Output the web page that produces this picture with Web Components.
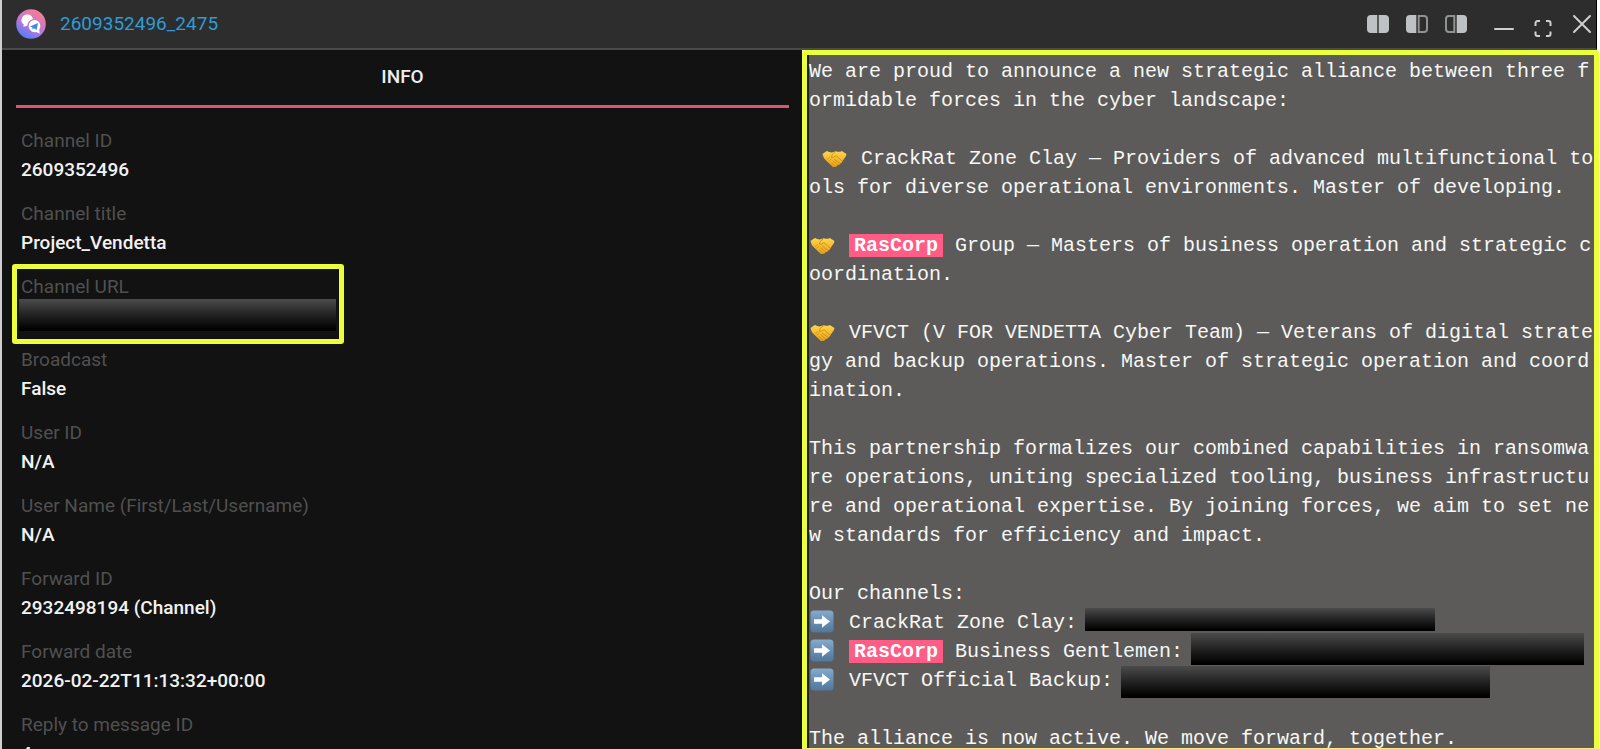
<!DOCTYPE html>
<html lang="en">
<head>
<meta charset="utf-8">
<title>2609352496_2475</title>
<style>
html, body { margin: 0; height: 100%; overflow: hidden; background: #cfcfcf; }
</style>
</head>
<body>
<message-window></message-window>
<script>
const define = (name, html) => {
  const t = document.createElement('template');
  t.innerHTML = html;
  customElements.define(name, class extends HTMLElement {
    constructor() {
      super();
      this.attachShadow({ mode: 'open' }).append(t.content.cloneNode(true));
    }
  });
};

define('redacted-bar', `<style>
:host { display: block; height: 32px; background: linear-gradient(#4b4b4b, #222 50%, #000 95%); }
</style>`);

define('mark-tag', `<style>
:host { display: inline; padding: 0 5px; background: #ff5c86; color: #fff; font-weight: 700; }
</style><slot></slot>`);

define('emoji-handshake', `<style>
:host { display: inline-block; width: 28px; height: 20px; vertical-align: -5px; white-space: normal; }
svg { display: block; margin-left: 1px; }
</style>
<svg width="25" height="20" viewBox="0 0 25 20" aria-hidden="true">
<defs><linearGradient id="g" x1="0" y1="0" x2="0" y2="1"><stop offset="0" stop-color="#ffd54a"/><stop offset="1" stop-color="#e9a21b"/></linearGradient></defs>
<path d="M.5 5 4.800 2Q8.600 4 11.500 3.100L14 2.200Q17 3.600 19.800 2L24.500 5Q24.600 7.400 21.800 10.200L20.300 12.300Q20 14.400 18.200 14.400 17.500 16.300 15.700 16 14.500 18.200 12.800 17.800 11 18.800 9.400 16.400L4.600 12Q.9 8.600.5 5Z" fill="url(#g)"/>
<path d="M12.800 3.200Q9.600 5 9.300 8 11.400 9.300 14 6.600L20.300 12.300M12.600 10.400l5.400 4M11 12l4.600 4M9.300 13.500l3.500 3.700M5.500 10.200l1.800-1.600M7 12l2-1.900" fill="none" stroke="#c98712" stroke-width=".8" stroke-linecap="round"/>
</svg>`);

define('emoji-arrow', `<style>
:host { display: inline-block; width: 28px; height: 23px; vertical-align: -5px; white-space: normal; }
svg { display: block; margin-left: 1px; }
</style>
<svg width="24" height="23" viewBox="0 0 24 23" aria-hidden="true">
<defs><linearGradient id="g" x1="0" y1="0" x2="0" y2="1"><stop offset="0" stop-color="#86abcc"/><stop offset=".5" stop-color="#6690b5"/><stop offset="1" stop-color="#52779a"/></linearGradient></defs>
<rect x=".5" y=".5" width="23" height="22" rx="3.500" fill="url(#g)"/>
<path d="M4 9.300h8V5.300L20 11.500l-8 6.200v-4H4z" fill="#fff"/>
</svg>`);

define('title-bar', `<style>
:host { display: flex; align-items: center; box-sizing: border-box; height: 50px; padding: 0 4px 0 14px; background: #2d2d2d; border-bottom: 2px solid #4a4a4a; }
a { flex: 1; margin-left: 14px; color: #2f9bd7; text-decoration: none; font-size: 19px; line-height: 24px; }
.tools, .views, .controls { display: flex; align-items: center; }
.tools { gap: 27px; }
.views { gap: 17px; }
.controls { gap: 20px; }
button { display: block; padding: 0; border: 0; background: none; }
svg { display: block; }
</style>
<svg width="30" height="30" viewBox="0 0 30 30" aria-hidden="true">
<defs><linearGradient id="g" x1=".15" y1="1" x2=".75" y2="0"><stop offset="0" stop-color="#3f7dff"/><stop offset=".45" stop-color="#b678dc"/><stop offset="1" stop-color="#ff7d87"/></linearGradient></defs>
<circle cx="15" cy="15" r="14.800" fill="url(#g)"/>
<path d="M11.500 5.500a5.600 5.600 0 0 1 5.400 4.800 7.200 7.200 0 0 0-5.600 6.500l-4 .9.500-2.100a5.600 5.600 0 0 1 3.700-10.100Z" fill="#fff"/>
<path d="M18.200 11a6.100 6.100 0 0 1 5 9.600l.5 3.800-3.500-1.400A6.100 6.100 0 1 1 18.200 11Z" fill="#fff"/>
<path d="m14 17.400 8-3.300-1.300 7-2.700-1.800-1.500 1.300-.1-2.200z" fill="#3a8fe0"/>
</svg>
<a href="#">2609352496_2475</a>
<div class="tools">
<div class="views">
<button aria-label="Split view"><svg width="22" height="18" viewBox="0 0 22 18"><path d="M4 0h6.300v18H4a4 4 0 0 1-4-4V4a4 4 0 0 1 4-4ZM11.700 0H18a4 4 0 0 1 4 4v10a4 4 0 0 1-4 4h-6.300z" fill="#bfc2c4"/></svg></button>
<button aria-label="Left view"><svg width="22" height="18" viewBox="0 0 22 18"><path d="M4 0h6.300v18H4a4 4 0 0 1-4-4V4a4 4 0 0 1 4-4Z" fill="#bfc2c4"/><path d="M12.700 1H18a3 3 0 0 1 3 3v10a3 3 0 0 1-3 3h-5.300z" fill="none" stroke="#8f9192" stroke-width="2"/></svg></button>
<button aria-label="Right view"><svg width="22" height="18" viewBox="0 0 22 18"><path d="M11.700 0H18a4 4 0 0 1 4 4v10a4 4 0 0 1-4 4h-6.300z" fill="#bfc2c4"/><path d="M9.300 1H4a3 3 0 0 0-3 3v10a3 3 0 0 0 3 3h5.300z" fill="none" stroke="#8f9192" stroke-width="2"/></svg></button>
</div>
<div class="controls">
<button aria-label="Minimize"><svg width="20" height="20" viewBox="0 0 20 20"><path d="M1 15h18" stroke="#d0d0d0" stroke-width="2" stroke-linecap="round"/></svg></button>
<button aria-label="Full screen"><svg width="18" height="28" viewBox="0 0 18 28"><path d="M1.500 16v-3a2 2 0 0 1 2-2h2.500M12 11h2.500a2 2 0 0 1 2 2v3M16.500 21.500v2.500a2 2 0 0 1-2 2H12M6 26H3.500a2 2 0 0 1-2-2v-2.500" fill="none" stroke="#d0d0d0" stroke-width="2"/></svg></button>
<button aria-label="Close"><svg width="20" height="20" viewBox="0 0 20 20"><path d="m2 2 16 16M18 2 2 18" stroke="#d0d0d0" stroke-width="2" stroke-linecap="round"/></svg></button>
</div>
</div>`);

define('info-field', `<style>
:host { display: block; position: relative; font-size: 19px; line-height: 29px; }
.label { color: #505050; }
.value { color: #f2f2f2; font-weight: 500; }
</style>
<div class="label"><slot name="label"></slot></div>
<div class="value"><slot></slot></div>`);

define('info-panel', `<style>
:host { display: block; min-width: 0; padding: 0 13px 0 14px; background: #121212; }
.tab { display: block; width: 100%; height: 58px; padding: 0 0 2px; border: 0; border-bottom: 3px solid #de5273; background: none; color: #eee; font: 500 19px/24px Roboto, sans-serif; }
.list { display: flex; flex-direction: column; gap: 15px; padding: 18px 5px 0; }
.frame { position: absolute; left: -9px; top: -8px; box-sizing: border-box; width: 332px; height: 80px; border: 5px solid #ebff3c; border-radius: 3px; }
redacted-bar { width: 317px; margin: -2px 0 0 -2px; }
.url { height: 58px; }
</style>
<button class="tab">INFO</button>
<div class="list">
<info-field><span slot="label">Channel ID</span>2609352496</info-field>
<info-field><span slot="label">Channel title</span>Project_Vendetta</info-field>
<info-field class="url"><span slot="label">Channel URL</span><redacted-bar></redacted-bar><div class="frame"></div></info-field>
<info-field><span slot="label">Broadcast</span>False</info-field>
<info-field><span slot="label">User ID</span>N/A</info-field>
<info-field><span slot="label">User Name (First/Last/Username)</span>N/A</info-field>
<info-field><span slot="label">Forward ID</span>2932498194 (Channel)</info-field>
<info-field><span slot="label">Forward date</span>2026-02-22T11:13:32+00:00</info-field>
<info-field><span slot="label">Reply to message ID</span>4</info-field>
</div>`);

define('message-panel', `<style>
:host { display: block; box-sizing: border-box; min-width: 0; overflow: hidden; border: 5px solid #ebff3c; border-bottom-width: 1px; border-radius: 3px 3px 0 0; background: #5c5b59; }
.text { box-sizing: border-box; min-height: 100%; padding: 2px 0 0; border-left: 2px solid #1d1d1b; white-space: pre-wrap; word-break: break-all; color: #f7f7f7; font: 20px/29px "Liberation Mono", monospace; }
p { margin: 0 0 29px; }
p:last-child { margin: 0; }
redacted-bar { display: inline-block; vertical-align: top; margin: -4px 0 -4px 8px; }
.short { width: 350px; height: 23px; margin-top: 0; }
.long { width: 393px; }
.mid { width: 369px; margin-top: 0; }
</style>
<div class="text"><p>We are proud to announce a new strategic alliance between three formidable forces in the cyber landscape:</p><p> <emoji-handshake></emoji-handshake> CrackRat Zone Clay — Providers of advanced multifunctional tools for diverse operational environments. Master of developing.</p><p><emoji-handshake></emoji-handshake> <mark-tag>RasCorp</mark-tag> Group — Masters of business operation and strategic coordination.</p><p><emoji-handshake></emoji-handshake> VFVCT (V FOR VENDETTA Cyber Team) — Veterans of digital strategy and backup operations. Master of strategic operation and coordination.</p><p>This partnership formalizes our combined capabilities in ransomware operations, uniting specialized tooling, business infrastructure and operational expertise. By joining forces, we aim to set new standards for efficiency and impact.</p><p>Our channels:
<emoji-arrow></emoji-arrow> CrackRat Zone Clay:<redacted-bar class="short"></redacted-bar>
<emoji-arrow></emoji-arrow> <mark-tag>RasCorp</mark-tag> Business Gentlemen:<redacted-bar class="long"></redacted-bar>
<emoji-arrow></emoji-arrow> VFVCT Official Backup:<redacted-bar class="mid"></redacted-bar></p><p>The alliance is now active. We move forward, together.</p></div>`);

define('message-window', `<style>
:host { display: flex; flex-direction: column; height: 100vh; margin-left: 2px; overflow: hidden; font-family: Roboto, sans-serif; background: #fff; }
title-bar { margin-right: 3px; border-right: 1px solid #000; flex: none; }
main { flex: 1; min-height: 0; display: grid; grid-template-columns: 800fr 797fr; margin-right: 1px; }
info-panel, message-panel { overflow: hidden; }
</style>
<title-bar></title-bar>
<main><info-panel></info-panel><message-panel></message-panel></main>`);
</script>
</body>
</html>
